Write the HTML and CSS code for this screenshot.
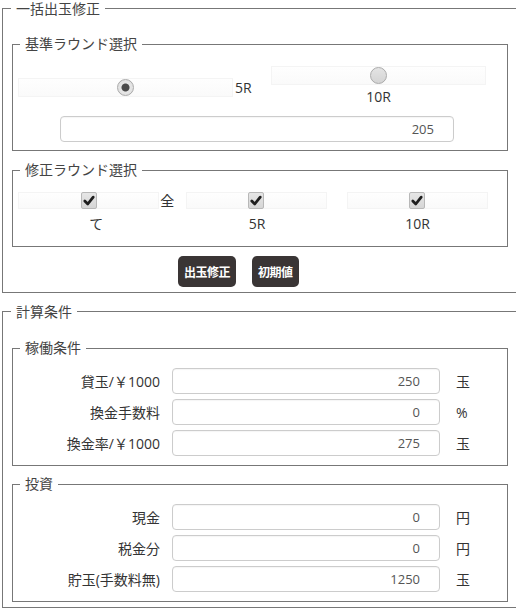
FILE: index.html
```html
<!DOCTYPE html>
<html lang="ja">
<head>
    <meta charset="UTF-8">
    <meta name="viewport" content="width=device-width, initial-scale=1.0">
    <title>出玉計算</title>
    <link rel="stylesheet" href="styles.css">
</head>
<body>
    <fieldset class="group">
        <legend>一括出玉修正</legend>

        <fieldset class="box">
            <legend>基準ラウンド選択</legend>
            <div class="radios">
                <label class="radio_cell inline">
                    <span class="strip"><span class="radio on"></span></span>
                    <span class="txt">5R</span>
                </label>
                <label class="radio_cell stacked">
                    <span class="strip"><span class="radio"></span></span>
                    <span class="txt">10R</span>
                </label>
            </div>
            <input class="num base" type="text" value="205">
        </fieldset>

        <fieldset class="box second">
            <legend>修正ラウンド選択</legend>
            <div class="checks">
                <label class="check_cell">
                    <span class="line">
                        <span class="strip"><span class="check"><svg viewBox="0 0 16 16"><path d="M3.2 8.6 L6.6 12 L12.8 4.2"/></svg></span></span>
                        <span>全</span>
                    </span>
                    <span class="txt">て</span>
                </label>
                <label class="check_cell">
                    <span class="line">
                        <span class="strip"><span class="check"><svg viewBox="0 0 16 16"><path d="M3.2 8.6 L6.6 12 L12.8 4.2"/></svg></span></span>
                    </span>
                    <span class="txt">5R</span>
                </label>
                <label class="check_cell">
                    <span class="line">
                        <span class="strip"><span class="check"><svg viewBox="0 0 16 16"><path d="M3.2 8.6 L6.6 12 L12.8 4.2"/></svg></span></span>
                    </span>
                    <span class="txt">10R</span>
                </label>
            </div>
        </fieldset>

        <div class="actions">
            <button class="btn">出玉修正</button>
            <button class="btn">初期値</button>
        </div>
    </fieldset>

    <fieldset class="group next">
        <legend>計算条件</legend>

        <fieldset class="box">
            <legend>稼働条件</legend>
            <div class="rows">
                <span class="lbl">貸玉/￥1000</span>
                <input class="num" type="text" value="250">
                <span class="unit">玉</span>

                <span class="lbl">換金手数料</span>
                <input class="num" type="text" value="0">
                <span class="unit">%</span>

                <span class="lbl">換金率/￥1000</span>
                <input class="num" type="text" value="275">
                <span class="unit">玉</span>
            </div>
        </fieldset>

        <fieldset class="box second">
            <legend>投資</legend>
            <div class="rows">
                <span class="lbl">現金</span>
                <input class="num" type="text" value="0">
                <span class="unit">円</span>

                <span class="lbl">税金分</span>
                <input class="num" type="text" value="0">
                <span class="unit">円</span>

                <span class="lbl">貯玉(手数料無)</span>
                <input class="num" type="text" value="1250">
                <span class="unit">玉</span>
            </div>
        </fieldset>
    </fieldset>
</body>
</html>
```

FILE: styles.css
```css
* {
    box-sizing: border-box;
}

body {
    margin: 0;
    overflow: hidden;
    font-family: "Open Sans", "Noto Sans CJK JP", sans-serif;
    font-size: 14px;
    color: #333;
}

fieldset {
    min-width: 0;
    border: 1px solid #777;
}

legend {
    padding: 0 5px;
    font-size: 14px;
    line-height: 16px;
    color: #444;
}

/* 外枠 */
.group {
    width: 516px;
    margin: 0 0 0 2px;
    padding: 19px 9px 5px 9px;
}

.group > legend {
    margin-left: -1px;
    line-height: 17px;
}

.group.next {
    margin-top: 10px;
    padding-top: 20px;
}

/* 内枠 */
.box {
    margin: 0;
    padding: 14px 6px 8px 5px;
}

.box > legend {
    margin-left: 2px;
}

.box.second {
    margin-top: 11px;
    padding-bottom: 11px;
}

.group.next .box {
    padding-top: 12px;
    padding-bottom: 9px;
}

.group.next .box.second {
    margin-top: 10px;
}

.strip {
    display: flex;
    align-items: center;
    justify-content: center;
    height: 18px;
    border: 1px solid #f4f4f4;
    background: linear-gradient(#fefefe, #fafafa);
}

/* ラジオ */
.radios {
    display: flex;
    align-items: center;
}

.radio_cell {
    display: flex;
    align-items: center;
}

.radio_cell.inline {
    width: 238px;
}

.radio_cell.inline .txt {
    margin-left: 2px;
}

.radio_cell.stacked {
    flex: 1;
    flex-direction: column;
}

.radio_cell .strip {
    width: 215px;
    height: 19px;
}

.radio_cell.stacked .txt {
    line-height: 22px;
    margin-top: 1px;
}

.radio {
    width: 17px;
    height: 17px;
    border-radius: 50%;
    border: 1px solid #aaa;
    background: linear-gradient(#e4e4e4, #d4d4d4);
}

.radio.on {
    background: radial-gradient(circle, #4a4a4a 0, #4a4a4a 3.5px, #e6e6e6 4.5px, #dcdcdc 100%);
}

.num {
    display: block;
    height: 26px;
    padding: 0 19px 0 6px;
    border: 1px solid #ccc;
    border-radius: 4px;
    box-shadow: inset 0 1px 1px rgba(0, 0, 0, 0.04);
    font-family: "Open Sans", "Noto Sans CJK JP", sans-serif;
    font-size: 13px;
    color: #555;
    text-align: right;
    background: #fff;
}

.num.base {
    width: 394px;
    margin: 8px 0 0 42px;
}

/* チェック */
.checks {
    display: grid;
    grid-template-columns: repeat(3, 1fr);
    margin: 0 3px 0 -2px;
}

.check_cell {
    display: flex;
    flex-direction: column;
    align-items: center;
}

.check_cell .line {
    display: flex;
    align-items: center;
    height: 17px;
    line-height: 17px;
}

.check_cell .strip {
    width: 141px;
    height: 17px;
    margin-right: 1px;
}

.check_cell .txt {
    margin-top: 4px;
    line-height: 22px;
}

.check {
    display: flex;
    width: 16px;
    height: 17px;
    border: 1px solid #b8b8b8;
    border-radius: 2px;
    background: linear-gradient(#e6e6e6, #d6d6d6);
    align-items: center;
    justify-content: center;
}

.check svg {
    width: 15px;
    height: 15px;
}

.check path {
    fill: none;
    stroke: #1e1e1e;
    stroke-width: 3.2;
    stroke-linecap: round;
    stroke-linejoin: round;
}

/* ボタン */
.actions {
    display: flex;
    gap: 16px;
    margin-top: 9px;
    padding-left: 166px;
}

.btn {
    height: 31px;
    padding: 0 6px;
    border: none;
    border-radius: 5px;
    background: #3a3535;
    color: #fff;
    font-family: "Noto Sans CJK JP", sans-serif;
    font-size: 12px;
    font-weight: bold;
    line-height: 31px;
    letter-spacing: -0.5px;
}

/* 入力行 */
.rows {
    display: grid;
    grid-template-columns: 142px 268px auto;
    column-gap: 12px;
    row-gap: 5px;
    align-items: center;
}

.rows .lbl {
    text-align: right;
    white-space: nowrap;
}

.rows .unit {
    margin-left: 4px;
}
```
